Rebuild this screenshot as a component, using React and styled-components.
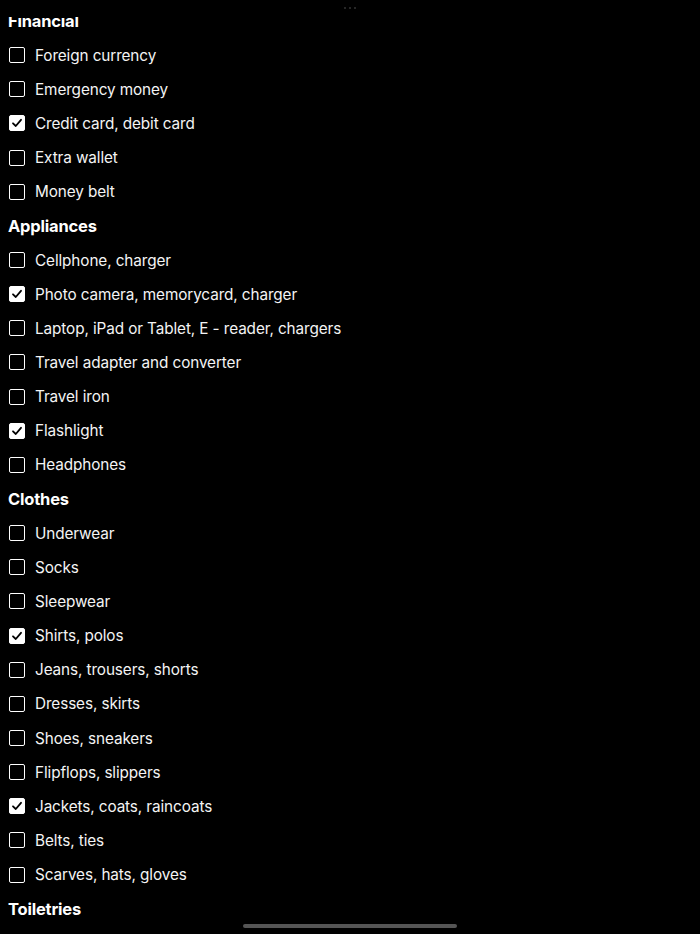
import React from 'react'
import styled, { createGlobalStyle } from 'styled-components'

const GlobalStyle = createGlobalStyle`
  html, body {
    margin: 0;
    padding: 0;
    background: #000;
    font-family: Inter, "Noto Sans", sans-serif;
    color: #fff;
  }
`

const sections = [
  {
    title: 'Financial',
    items: [
      ['Foreign currency', false],
      ['Emergency money', false],
      ['Credit card, debit card', true],
      ['Extra wallet', false],
      ['Money belt', false],
    ],
  },
  {
    title: 'Appliances',
    items: [
      ['Cellphone, charger', false],
      ['Photo camera, memorycard, charger', true],
      ['Laptop, iPad or Tablet, E - reader, chargers', false],
      ['Travel adapter and converter', false],
      ['Travel iron', false],
      ['Flashlight', true],
      ['Headphones', false],
    ],
  },
  {
    title: 'Clothes',
    items: [
      ['Underwear', false],
      ['Socks', false],
      ['Sleepwear', false],
      ['Shirts, polos', true],
      ['Jeans, trousers, shorts', false],
      ['Dresses, skirts', false],
      ['Shoes, sneakers', false],
      ['Flipflops, slippers', false],
      ['Jackets, coats, raincoats', true],
      ['Belts, ties', false],
      ['Scarves, hats, gloves', false],
    ],
  },
  {
    title: 'Toiletries',
    items: [],
  },
]

const Screen = styled.div`
  position: relative;
  width: 700px;
  height: 934px;
  overflow: hidden;
  background: #000;
`

const List = styled.div`
  display: flex;
  flex-direction: column;
  padding: 4px 0 0 8px;
`

const Header = styled.div`
  height: 34.15px;
  display: flex;
  align-items: center;
  font-size: 16.5px;
  font-weight: 700;
  letter-spacing: -0.2px;
`

const Row = styled.label`
  height: 34.15px;
  display: flex;
  align-items: center;
  gap: 10px;
  font-size: 15.3px;
  letter-spacing: -0.1px;
  color: #f4f4f4;
`

const Box = styled.span`
  box-sizing: border-box;
  width: 16px;
  height: 16px;
  margin-left: 1px;
  border: 1.5px solid #fff;
  border-radius: 2px;
  background: ${p => (p.$checked ? '#fff' : 'transparent')};
  display: flex;
  align-items: center;
  justify-content: center;
`

const TopBar = styled.div`
  position: absolute;
  top: 0;
  left: 0;
  right: 0;
  height: 17px;
  background: #000;
  display: flex;
  justify-content: center;
  gap: 3px;
  padding-top: 7px;
  box-sizing: border-box;
`

const Dot = styled.span`
  width: 2px;
  height: 2px;
  border-radius: 50%;
  background: #333;
`

const HomeIndicator = styled.div`
  position: absolute;
  bottom: 6px;
  left: 243px;
  width: 214px;
  height: 4px;
  border-radius: 2px;
  background: #555;
`

const Check = () => (
  <svg width="12" height="12" viewBox="0 0 12 12">
    <path d="M2 6.3 L4.8 9 L10 2.8" fill="none" stroke="#000" strokeWidth="1.8" strokeLinecap="round" strokeLinejoin="round" />
  </svg>
)

export default function App() {
  return (
    <Screen>
      <GlobalStyle />
      <List>
        {sections.map(s => (
          <React.Fragment key={s.title}>
            <Header>{s.title}</Header>
            {s.items.map(([label, checked]) => (
              <Row key={label}>
                <Box $checked={checked}>{checked && <Check />}</Box>
                {label}
              </Row>
            ))}
          </React.Fragment>
        ))}
      </List>
      <TopBar>
        <Dot />
        <Dot />
        <Dot />
      </TopBar>
      <HomeIndicator />
    </Screen>
  )
}
